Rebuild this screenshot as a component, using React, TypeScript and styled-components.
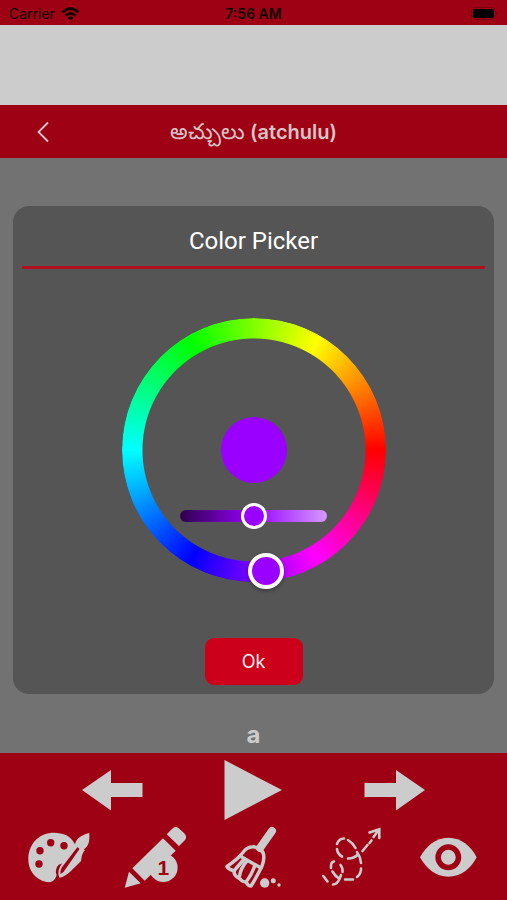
import React, { useState } from "react";
import styled, { createGlobalStyle } from "styled-components";

const red = "#9e0014";
const light = "#cccccc";

const GlobalStyle = createGlobalStyle`
  *, *::before, *::after { box-sizing: border-box; }
  body { margin: 0; background: #727272; font-family: Inter, "Noto Sans", sans-serif; }
  button { font-family: inherit; cursor: pointer; }
`;

const Screen = styled.div`
  min-height: 100vh;
  display: flex;
  flex-direction: column;
`;

const StatusBar = styled.div`
  height: 25px;
  padding: 2px 9px 0;
  display: grid;
  grid-template-columns: 1fr auto 1fr;
  align-items: center;
  background: ${red};
  color: #100002;
  font-size: 14px;
  line-height: 20px;
`;

const Carrier = styled.span`
  display: flex;
  align-items: center;
  gap: 6px;
`;

const Clock = styled.time`
  font-size: 14px;
  font-weight: 600;
`;

const Battery = styled.svg`
  justify-self: end;
`;

const Banner = styled.div`
  height: 80px;
  background: ${light};
`;

const Header = styled.header`
  height: 53px;
  padding: 0 32px;
  display: grid;
  grid-template-columns: 24px 1fr 24px;
  align-items: center;
  background: ${red};
`;

const Heading = styled.h1`
  margin: 0;
  text-align: center;
  color: #d8c4c6;
  font-size: 20px;
  line-height: 28px;
  font-weight: 600;
`;

const Telugu = styled.span`
  font-size: 22px;
  font-weight: 500;
`;

const IconButton = styled.button`
  display: flex;
  align-items: center;
  justify-content: center;
  padding: 0;
  border: 0;
  background: none;
  color: ${light};
`;

const Content = styled.main`
  flex: 1;
  display: flex;
  flex-direction: column;
  align-items: center;
  gap: 24px;
  padding: 48px 13px 0;
  background: #727272;
`;

const Dialog = styled.section`
  width: 100%;
  padding: 20px 9px 9px;
  display: flex;
  flex-direction: column;
  align-items: center;
  border-radius: 16px;
  background: #555555;
`;

const DialogTitle = styled.h2`
  margin: 0;
  padding-bottom: 10px;
  align-self: stretch;
  border-bottom: 3px solid #b3101f;
  text-align: center;
  color: #ffffff;
  font-family: Roboto, Inter, sans-serif;
  font-size: 24px;
  line-height: 30px;
  font-weight: 400;
`;

const Wheel = styled.div`
  position: relative;
  width: 264px;
  height: 264px;
  margin: 49px 0 56px;
  display: grid;
  grid-template-rows: 99px 66px 20px 26px;
  justify-items: center;
`;

const Ring = styled.div`
  position: absolute;
  inset: 0;
  border-radius: 50%;
  background: conic-gradient(from 90deg, #f00, #f0f, #00f, #0ff, #0f0, #ff0, #f00);
  mask: radial-gradient(circle closest-side, transparent 111px, #000 112px);
`;

const Swatch = styled.div`
  grid-row: 2;
  width: 66px;
  height: 66px;
  border-radius: 50%;
`;

const Lightness = styled.input`
  grid-row: 4;
  position: relative;
  appearance: none;
  width: 147px;
  height: 26px;
  margin: 0;
  background: none;
  cursor: pointer;

  &::-webkit-slider-runnable-track {
    height: 12px;
    border-radius: 6px;
    background: var(--track);
  }
  &::-webkit-slider-thumb {
    appearance: none;
    width: 26px;
    height: 26px;
    margin-top: -7px;
    border: 3px solid #ffffff;
    border-radius: 50%;
    background: var(--color);
  }
`;

const HueInput = styled.input`
  position: absolute;
  inset: auto 0 0 0;
  width: 100%;
  height: 36px;
  margin: 0;
  opacity: 0;
  cursor: pointer;
`;

const HueThumb = styled.span`
  position: absolute;
  width: 36px;
  height: 36px;
  margin: -18px 0 0 -18px;
  border: 4px solid #ffffff;
  border-radius: 50%;
  box-shadow: 0 2px 4px rgba(0, 0, 0, 0.3);
  pointer-events: none;
`;

const OkButton = styled.button`
  width: 98px;
  height: 47px;
  border: 0;
  border-radius: 9px;
  background: #cc001a;
  color: #ffeef0;
  font-size: 18px;
`;

const Letter = styled.p`
  margin: 0;
  color: ${light};
  font-size: 24px;
  line-height: 34px;
  font-weight: 700;
`;

const Toolbar = styled.footer`
  padding: 5px 0 11px;
  background: ${red};
`;

const PlayRow = styled.div`
  display: flex;
  justify-content: space-around;
  padding: 0 41px;
`;

const ToolRow = styled.div`
  display: flex;
  justify-content: space-around;
  padding: 3px 10px 0;
`;

function Icon({ size = 64, children }: { size?: number; children: React.ReactNode }) {
  return (
    <svg width={size} height={size} viewBox={`0 0 ${size} ${size}`} fill="currentColor" aria-hidden="true">
      {children}
    </svg>
  );
}

function PaletteIcon() {
  return (
    <Icon>
      <path d="M20 57C8 55 1 45 1.3 33.5C1.7 18 13 7.7 27 7.7C36 7.7 44 11 47.5 18.5L50 24L36 38.500C31 38.500 29.500 42 29.800 47C30 53.500 26 58 20 57Z" />
      <g fill={red}>
        <circle cx="23.700" cy="17.700" r="3.700" />
        <circle cx="37" cy="20.700" r="3.700" />
        <circle cx="13" cy="25.700" r="3.700" />
        <circle cx="12" cy="39" r="3.700" />
      </g>
      <path d="M62.300 8C54 10 48 14 47.500 22L50 28L56 25C63 21 62.500 14 62.300 8Z" />
      <path d="M49 20L58 25C54.500 29 54.500 33 54 36L48 42C43 47 38 52 32.500 52.700C30.500 48 31.500 44 34 40Z" />
      <path d="M50.500 22L52.500 24L36.500 47L33.500 49C33 46 34 43.500 35.500 41.500Z" fill={red} />
      <path d="M31.500 41.500C29.500 44 29.700 46 30 49" fill="none" stroke={red} strokeWidth="2" />
    </Icon>
  );
}

function PencilIcon() {
  return (
    <Icon>
      <path d="M0.700 62.700L5 46.700L16.700 58.300Z" />
      <path d="M8.300 43.300L39 13.300L51.700 25.700L20.700 55.700Z" />
      <path d="M42.700 9.300L48 4Q51 0.500 54.500 3L60.500 8.500Q63.500 12 61 15L55 21Z" />
      <circle cx="39.300" cy="42.700" r="14.300" />
      <text x="39.300" y="50" textAnchor="middle" fontFamily="Liberation Sans, sans-serif" fontWeight="700" fontSize="21" fill={red}>
        1
      </text>
    </Icon>
  );
}

function BroomIcon() {
  return (
    <Icon>
      <g fill="none" stroke="currentColor" strokeLinecap="round" strokeLinejoin="round" strokeWidth="3.500">
        <path d="M51 6L39 23" strokeWidth="8" />
        <path d="M19 31L24 25C28 21 35 21 39 24C43 27 44 33 41 41L40 43Z" />
        <path d="M19 31C15 35 11 38 6 41.500C7 44 10 45 13 46C13 49 15 52 18 53C20 55.500 22 57 25 57C26 59 28 61 30 61C34 55 37 49 40 43" />
        <path d="M23 34C20 38 16 42 13 46M26 36C22 40 19 47 18 53M34 40C32 46 29 52 25 57" />
      </g>
      <circle cx="43.700" cy="58" r="4.700" />
      <circle cx="52.300" cy="55.700" r="2.500" />
      <circle cx="58" cy="60" r="1.700" />
    </Icon>
  );
}

function TraceIcon() {
  return (
    <Icon>
      <g fill="none" stroke="currentColor" strokeLinecap="round" strokeWidth="2.600">
        <path d="M4.300 51L8.500 56.500M14 59.500Q18 59.500 20.500 54L22 50M23.500 47Q24 43 21.500 40" />
        <path d="M15 36.500Q11.500 37 12 43M13.500 46.500Q16 51 20 53.500M26 54.500L34 54.500M38 52Q42 49 42 43.500M42 38Q41.500 32 38 27" />
        <path d="M25 13.500Q20 13.500 18 19M18 24Q18.500 29 23 31.500M29 33.500Q35 33.500 39 29.500M29 15Q34 18 36.500 23" />
        <path d="M43.500 26L48.500 20M50.500 18L52.500 15.500M54.500 12L60 4.500M50.500 7.500L60.300 4.300L60.300 13" />
      </g>
    </Icon>
  );
}

function EyeIcon() {
  return (
    <Icon>
      <path d="M4 32.300C10 21 20 12.700 32.300 12.700C45 12.700 55 21 60.700 32.300C55 43.500 45 51.700 32.300 51.700C20 51.700 10 43.500 4 32.300Z" />
      <circle cx="32.300" cy="32.300" r="10.200" fill="none" stroke={red} strokeWidth="5.500" />
    </Icon>
  );
}

const tools = [
  { label: "Choose color", Drawing: PaletteIcon },
  { label: "Pencil size", Drawing: PencilIcon },
  { label: "Clear drawing", Drawing: BroomIcon },
  { label: "Trace path", Drawing: TraceIcon },
  { label: "Show letter", Drawing: EyeIcon },
];

export default function App() {
  const [hue, setHue] = useState(276);
  const [lightness, setLightness] = useState(50);
  const color = `hsl(${hue} 100% ${lightness}%)`;
  const pure = `hsl(${hue} 100% 50%)`;
  const angle = (hue * Math.PI) / 180;

  return (
    <Screen>
      <GlobalStyle />
      <StatusBar>
        <Carrier>
          Carrier
          <svg width="19" height="14" viewBox="0 0 19 14" aria-hidden="true">
            <g fill="none" stroke="currentColor" strokeWidth="2.600">
              <path d="M1.500 5.200Q9.500 -2 17.500 5.200" />
              <path d="M4.500 8.600Q9.500 4 14.500 8.600" />
            </g>
            <path d="M6.700 10.700Q9.500 8.500 12.300 10.700L9.500 13.600Z" fill="currentColor" />
          </svg>
        </Carrier>
        <Clock>7:56 AM</Clock>
        <Battery width="27" height="13" viewBox="0 0 27 13" aria-hidden="true">
          <rect x="0.500" y="0.500" width="24" height="12" rx="3" fill="none" stroke="#7c0010" />
          <rect x="2" y="2" width="21" height="9" rx="1.500" fill="#000" />
          <path d="M25.500 4.500Q27.500 6.500 25.500 8.500Z" fill="#7c0010" />
        </Battery>
      </StatusBar>
      <Banner />
      <Header>
        <IconButton aria-label="Back">
          <svg width="24" height="24" viewBox="0 0 24 24" fill="none" stroke="#e0c8ca" strokeWidth="1.800" aria-hidden="true">
            <path d="M16 2.500L6.500 12L16 21.500" />
          </svg>
        </IconButton>
        <Heading>
          <Telugu lang="te">అచ్చులు</Telugu> (atchulu)
        </Heading>
      </Header>
      <Content>
        <Dialog role="dialog" aria-labelledby="picker-title">
          <DialogTitle id="picker-title">Color Picker</DialogTitle>
          <Wheel>
            <Ring />
            <HueInput
              type="range"
              aria-label="Hue"
              min={0}
              max={360}
              value={hue}
              onChange={(e) => setHue(Number(e.target.value))}
            />
            <HueThumb
              style={{
                left: 132 + 122 * Math.cos(angle),
                top: 132 - 122 * Math.sin(angle),
                background: pure,
              }}
            />
            <Swatch style={{ background: color }} />
            <Lightness
              type="range"
              aria-label="Lightness"
              min={15}
              max={85}
              value={lightness}
              onChange={(e) => setLightness(Number(e.target.value))}
              style={
                {
                  "--color": color,
                  "--track": `linear-gradient(to right, hsl(${hue} 100% 15%), ${pure}, hsl(${hue} 100% 80%))`,
                } as React.CSSProperties
              }
            />
          </Wheel>
          <OkButton>Ok</OkButton>
        </Dialog>
        <Letter>a</Letter>
      </Content>
      <Toolbar>
        <PlayRow>
          <IconButton aria-label="Previous letter">
            <Icon>
              <path d="M2 32L31 12V25H62.500V39H31V52.500Z" />
            </Icon>
          </IconButton>
          <IconButton aria-label="Play">
            <Icon>
              <path d="M3.500 2V62L61 32Z" />
            </Icon>
          </IconButton>
          <IconButton aria-label="Next letter">
            <Icon>
              <path d="M62 32L33 12V25H1.500V39H33V52.500Z" />
            </Icon>
          </IconButton>
        </PlayRow>
        <ToolRow>
          {tools.map(({ label, Drawing }) => (
            <IconButton key={label} aria-label={label}>
              <Drawing />
            </IconButton>
          ))}
        </ToolRow>
      </Toolbar>
    </Screen>
  );
}
